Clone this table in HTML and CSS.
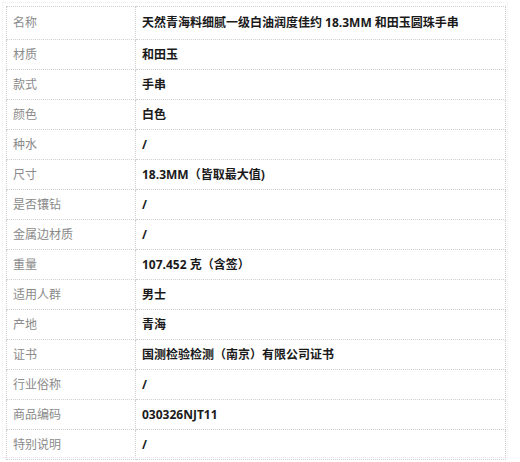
FILE: index.html
```html
<!DOCTYPE html>
<html lang="zh-CN">
<head>
<meta charset="utf-8">
<link rel="stylesheet" href="styles.css">
</head>
<body>
<div class="frame">
<table class="spec">
<tr class="first"><td class="k">名称</td><td class="v">天然青海料细腻一级白油润度佳约 18.3MM 和田玉圆珠手串</td></tr>
<tr><td class="k">材质</td><td class="v">和田玉</td></tr>
<tr><td class="k">款式</td><td class="v">手串</td></tr>
<tr><td class="k">颜色</td><td class="v">白色</td></tr>
<tr><td class="k">种水</td><td class="v">/</td></tr>
<tr><td class="k">尺寸</td><td class="v">18.3MM（皆取最大值)</td></tr>
<tr><td class="k">是否镶钻</td><td class="v">/</td></tr>
<tr><td class="k">金属边材质</td><td class="v">/</td></tr>
<tr><td class="k">重量</td><td class="v">107.452 克（含签）</td></tr>
<tr><td class="k">适用人群</td><td class="v">男士</td></tr>
<tr><td class="k">产地</td><td class="v">青海</td></tr>
<tr><td class="k">证书</td><td class="v">国测检验检测（南京）有限公司证书</td></tr>
<tr><td class="k">行业俗称</td><td class="v">/</td></tr>
<tr><td class="k">商品编码</td><td class="v">030326NJT11</td></tr>
<tr><td class="k">特别说明</td><td class="v">/</td></tr>
</table>
</div>
</body>
</html>
```

FILE: styles.css
```css
html, body {
  margin: 0;
  padding: 0;
  background: #fff;
}
body {
  font-family: "Open Sans", "Noto Sans CJK SC", sans-serif;
  font-size: 12px;
}
.frame {
  margin: 2px;
  width: 506px;
  height: 456px;
  box-sizing: border-box;
  border: 1px dotted #f0f0f0;
  padding: 3px 0 0 3px;
}
.spec {
  border-collapse: collapse;
  width: 500px;
  table-layout: fixed;
}
.spec td {
  border: 1px dotted #cfcfcf;
  height: 29px;
  padding: 0;
  vertical-align: middle;
  line-height: 16px;
}
.spec tr.first td {
  height: 32px;
}
.spec td.k {
  width: 122px;
  padding-left: 6px;
  color: #8a8a8a;
}
.spec td.v {
  padding-left: 6px;
  color: #1a1a1a;
  font-weight: bold;
}
```
